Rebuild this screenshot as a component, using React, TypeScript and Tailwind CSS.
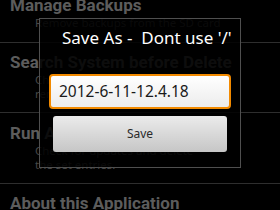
import React from "react"

const font = { fontFamily: '"Noto Sans", "Open Sans", sans-serif' }

function Item({ title, lines }: { title: string; lines: string[] }) {
  return (
    <div className="px-[10px]">
      <div className="font-['Roboto',sans-serif] text-[17px] font-bold leading-[22px] text-[#5c5c5c] whitespace-nowrap">
        {title}
      </div>
      <div className="pl-[25px] text-[11.5px] leading-[14px] text-[#484848]">
        {lines.map((l) => (
          <div key={l} className="whitespace-nowrap">{l}</div>
        ))}
      </div>
    </div>
  )
}

export default function App() {
  return (
    <div className="relative h-[210px] w-[280px] overflow-hidden bg-black" style={font}>
      <div className="flex flex-col -mt-[6px]">
        <div className="h-[49px] border-b border-[#2e2e2e]">
          <Item title="Manage Backups" lines={["Remove backups from the SD card"]} />
        </div>
        <div className="h-[70px] border-b border-[#2e2e2e] pt-[8px]">
          <Item
            title="Search System before Delete"
            lines={["Check the system apps and find", "remove any data left behind"]}
          />
        </div>
        <div className="h-[71px] border-b border-[#2e2e2e] pt-[9px]">
          <Item
            title="Run After Restore"
            lines={["Check for updates and delete", "the set entries."]}
          />
        </div>
        <div className="pt-[8px]">
          <Item title="About this Application" lines={["Version and credits"]} />
        </div>
      </div>

      <div className="absolute left-[39px] top-[18px] flex h-[150px] w-[202px] flex-col border border-[#4f4f4f] bg-black/[0.86]">
        <div className="whitespace-pre pl-[22px] pt-[7px] text-[17px] leading-[24px] text-white">
          Save As -  Dont use '/'
        </div>
        <div className="ml-[9px] mr-[9px] mt-[24px] flex h-[35px] items-center rounded-[4px] border-2 border-[#f28a00] bg-gradient-to-b from-white to-[#ececec] pl-[8px] text-[15.5px] text-[#1a1a1a]">
          2012-6-11-12.4.18
        </div>
        <div className="ml-[13px] mr-[13px] mt-[7px] flex h-[36px] items-center justify-center rounded-[3px] bg-gradient-to-b from-[#ebebeb] to-[#c6c6c6] text-[12px] text-[#2a2a2a]">
          Save
        </div>
      </div>
    </div>
  )
}
